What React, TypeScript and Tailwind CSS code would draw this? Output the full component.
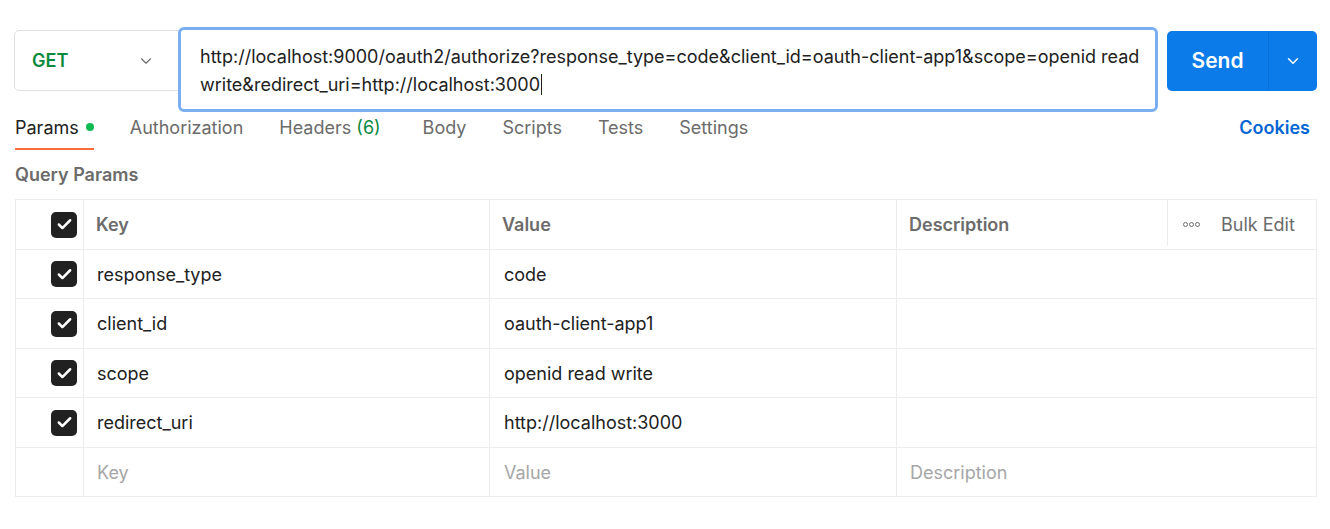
import { Check, ChevronDown } from "lucide-react";

const rows = [
  { key: "response_type", value: "code" },
  { key: "client_id", value: "oauth-client-app1" },
  { key: "scope", value: "openid read write" },
  { key: "redirect_uri", value: "http://localhost:3000" },
];

const rowHeights = ["h-[49px]", "h-[50px]", "h-[49px]", "h-[50px]"];

function Box() {
  return (
    <span className="flex h-[26px] w-[26px] items-center justify-center rounded-[5px] bg-[#212121]">
      <Check size={17} strokeWidth={3.5} className="text-white" />
    </span>
  );
}

const tabs = ["Authorization", "Headers", "Body", "Scripts", "Tests", "Settings"];

export default function App() {
  return (
    <div className="h-[529px] w-[1330px] bg-white font-['Inter',sans-serif] text-[18px] text-[#212121]">
      {/* request bar */}
      <div className="flex items-start pl-[14px] pt-[27px]">
        <div className="mt-[3px] flex h-[61px] w-[166px] items-center justify-between rounded-l-[5px] border border-[#e0e0e0] pl-[17px] pr-[24px]">
          <span className="font-semibold text-[#0b8a3e]">GET</span>
          <ChevronDown size={18} strokeWidth={1.5} className="text-[#6b6b6b]" />
        </div>
        <div className="z-10 -ml-[2px] h-[85px] w-[980px] rounded-[6px] border-[3px] border-[#7ab0f2] pl-[19px] pr-[8px] pt-[13px] leading-[27px]">
          http://localhost:9000/oauth2/authorize?response_type=code&amp;client_id=oauth-client-app1&amp;scope=openid read write&amp;redirect_uri=http://localhost:3000
          <span className="ml-px inline-block h-[21px] w-px translate-y-[4px] bg-[#212121]" />
        </div>
        <div className="ml-[9px] mt-[4px] flex h-[60px] w-[150px] overflow-hidden rounded-[5px] bg-[#0c7bea] text-white">
          <div className="flex w-[101px] items-center justify-center text-[21px] font-semibold">Send</div>
          <div className="w-px bg-[#0a6ed2]" />
          <div className="flex flex-1 items-center justify-center">
            <ChevronDown size={18} strokeWidth={2} />
          </div>
        </div>
      </div>

      {/* tabs */}
      <div className="flex items-start justify-between pl-[15px] pr-[20px]">
        <div className="flex gap-[36px] text-[#6b6b6b]">
          <div className="flex h-[38px] items-center gap-[7px] border-b-2 border-[#ff6c37] pb-[6px] text-[#212121]">
            Params
            <span className="h-[8px] w-[8px] rounded-full bg-[#0cbb52]" />
          </div>
          {tabs.map((t) => (
            <div key={t} className="flex h-[38px] items-center pb-[8px]">
              {t === "Headers" ? (
                <span className="pr-[6px]">
                  Headers <span className="text-[#0b8a3e]">(6)</span>
                </span>
              ) : (
                t
              )}
            </div>
          ))}
        </div>
        <div className="flex h-[38px] items-center pb-[8px] font-semibold text-[#0265d2]">Cookies</div>
      </div>

      <div className="pl-[15px] pt-[13px] font-semibold leading-[24px] text-[#6b6b6b]">Query Params</div>

      {/* table */}
      <div className="mx-[15px] mt-[12px] w-[1302px] border border-[#ededed]">
        <div className="grid h-[50px] grid-cols-[67px_406px_407px_271px_1fr] border-b border-[#ededed] font-semibold text-[#6b6b6b]">
          <div className="flex items-center justify-end pr-[6px]">
            <Box />
          </div>
          <div className="flex items-center border-l border-[#ededed] pl-[12px]">Key</div>
          <div className="flex items-center border-l border-[#ededed] pl-[12px]">Value</div>
          <div className="flex items-center border-l border-[#ededed] pl-[12px]">Description</div>
          <div className="mb-[3px] flex items-center gap-[21px] border-l border-[#ededed] pl-[15px] pt-[2px] font-normal">
            <span className="flex gap-[1px]">
              <span className="h-[5px] w-[5px] rounded-full border border-[#6b6b6b]" />
              <span className="h-[5px] w-[5px] rounded-full border border-[#6b6b6b]" />
              <span className="h-[5px] w-[5px] rounded-full border border-[#6b6b6b]" />
            </span>
            Bulk Edit
          </div>
        </div>
        {rows.map((r, i) => (
          <div
            key={r.key}
            className={`grid ${rowHeights[i]} grid-cols-[67px_406px_407px_1fr] border-b border-[#ededed]`}
          >
            <div className="flex items-center justify-end pr-[6px]">
              <Box />
            </div>
            <div className="flex items-center border-l border-[#ededed] pl-[13px]">{r.key}</div>
            <div className="flex items-center border-l border-[#ededed] pl-[14px]">{r.value}</div>
            <div className="border-l border-[#ededed]" />
          </div>
        ))}
        <div className="grid h-[48px] grid-cols-[67px_406px_407px_1fr] text-[#a6a6a6]">
          <div />
          <div className="flex items-center border-l border-[#ededed] pl-[13px]">Key</div>
          <div className="flex items-center border-l border-[#ededed] pl-[14px]">Value</div>
          <div className="flex items-center border-l border-[#ededed] pl-[13px]">Description</div>
        </div>
      </div>
    </div>
  );
}
